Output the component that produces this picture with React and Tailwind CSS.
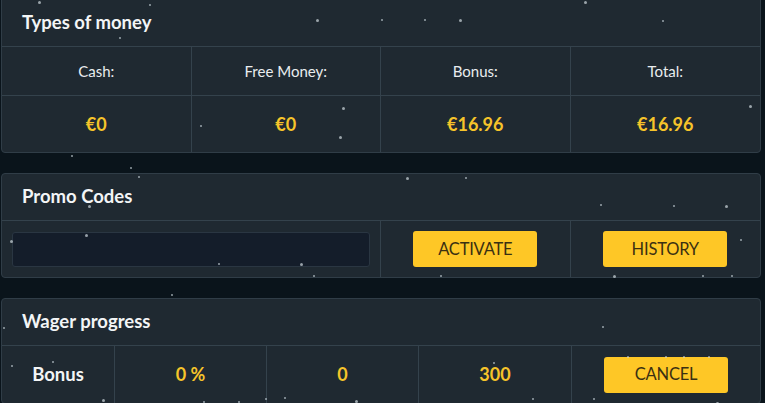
import React from 'react';

const stars = [
  [38, 1, 3], [149, 4, 2], [136, 20, 2], [316, 19, 3], [119, 37, 2], [342, 107, 3], [339, 136, 3],
  [200, 125, 2], [71, 155, 2], [381, 19, 2], [424, 19, 2], [459, 19, 3], [584, 1, 3], [662, 20, 2],
  [749, 105, 3], [130, 167, 2], [138, 176, 2], [88, 205, 3], [85, 234, 3], [10, 240, 3], [218, 263, 2],
  [300, 263, 3], [313, 275, 2], [406, 177, 3], [465, 177, 2], [600, 204, 2], [673, 205, 2],
  [725, 205, 3], [740, 239, 2], [440, 275, 2], [613, 275, 3], [702, 275, 2], [731, 275, 2],
  [171, 294, 2], [3, 327, 2], [11, 365, 2], [52, 361, 2], [102, 399, 3], [203, 401, 2], [238, 401, 2],
  [265, 398, 2], [284, 397, 2], [355, 400, 3], [602, 326, 2], [627, 356, 2], [665, 356, 2],
  [683, 356, 2], [708, 356, 2], [493, 362, 2], [532, 398, 2], [593, 398, 2], [716, 402, 3],
];

function Panel({ title, className = '', children }) {
  return (
    <div className={`bg-[#1f2931] border border-[#303d47] rounded-[4px] overflow-hidden ${className}`}>
      <div className="h-[47px] flex items-center px-[20px] text-[18.5px] font-bold text-[#f3f5f6] border-b border-[#34424c]">
        {title}
      </div>
      {children}
    </div>
  );
}

function YellowButton({ children }) {
  return (
    <button className="w-[124px] h-[36px] bg-[#fec726] rounded-[3px] text-[16.5px] text-[#3a3012] uppercase tracking-[-0.2px]">
      {children}
    </button>
  );
}

export default function App() {
  const types = [
    ['Cash:', '€0'],
    ['Free Money:', '€0'],
    ['Bonus:', '€16.96'],
    ['Total:', '€16.96'],
  ];

  return (
    <div className="relative w-[765px] h-[403px] overflow-hidden bg-[#0a141b] pl-px pr-[4px]" style={{ fontFamily: 'Lato, "Open Sans", sans-serif' }}>
      <Panel title="Types of money" className="-mt-px rounded-t-none">
        <div className="grid grid-cols-4">
          {types.map(([label], i) => (
            <div key={label} className={`h-[49px] flex items-center justify-center text-[15px] text-[#e9edef] border-b border-[#34424c] ${i < 3 ? 'border-r' : ''}`}>
              {label}
            </div>
          ))}
          {types.map(([label, value], i) => (
            <div key={label + 'v'} className={`h-[56px] flex items-center justify-center text-[18px] font-bold text-[#f6c42a] border-[#34424c] ${i < 3 ? 'border-r' : ''}`}>
              {value}
            </div>
          ))}
        </div>
      </Panel>

      <Panel title="Promo Codes" className="mt-[20px]">
        <div className="grid grid-cols-4 h-[56px]">
          <div className="col-span-2 flex items-center px-[10px] border-r border-[#34424c]">
            <input className="w-full h-[35px] bg-[#141d2a] border border-[#2a3642] rounded-[3px] outline-none" />
          </div>
          <div className="flex items-center justify-center border-r border-[#34424c]">
            <YellowButton>Activate</YellowButton>
          </div>
          <div className="flex items-center justify-center">
            <YellowButton>History</YellowButton>
          </div>
        </div>
      </Panel>

      <Panel title="Wager progress" className="mt-[20px]">
        <div className="grid grid-cols-[113px_152px_152px_153px_1fr] h-[57px]">
          <div className="flex items-center justify-center text-[18.5px] font-bold text-[#f3f5f6] border-r border-[#34424c]">Bonus</div>
          <div className="flex items-center justify-center text-[18px] font-bold text-[#f6c42a] border-r border-[#34424c]">0 %</div>
          <div className="flex items-center justify-center text-[18px] font-bold text-[#f6c42a] border-r border-[#34424c]">0</div>
          <div className="flex items-center justify-center text-[18px] font-bold text-[#f6c42a] border-r border-[#34424c]">300</div>
          <div className="flex items-center justify-center">
            <YellowButton>Cancel</YellowButton>
          </div>
        </div>
      </Panel>

      {stars.map(([x, y, s], i) => (
        <span
          key={i}
          className="absolute rounded-full bg-[#cfd8de] opacity-70 pointer-events-none"
          style={{ left: x, top: y, width: s, height: s }}
        />
      ))}
    </div>
  );
}
